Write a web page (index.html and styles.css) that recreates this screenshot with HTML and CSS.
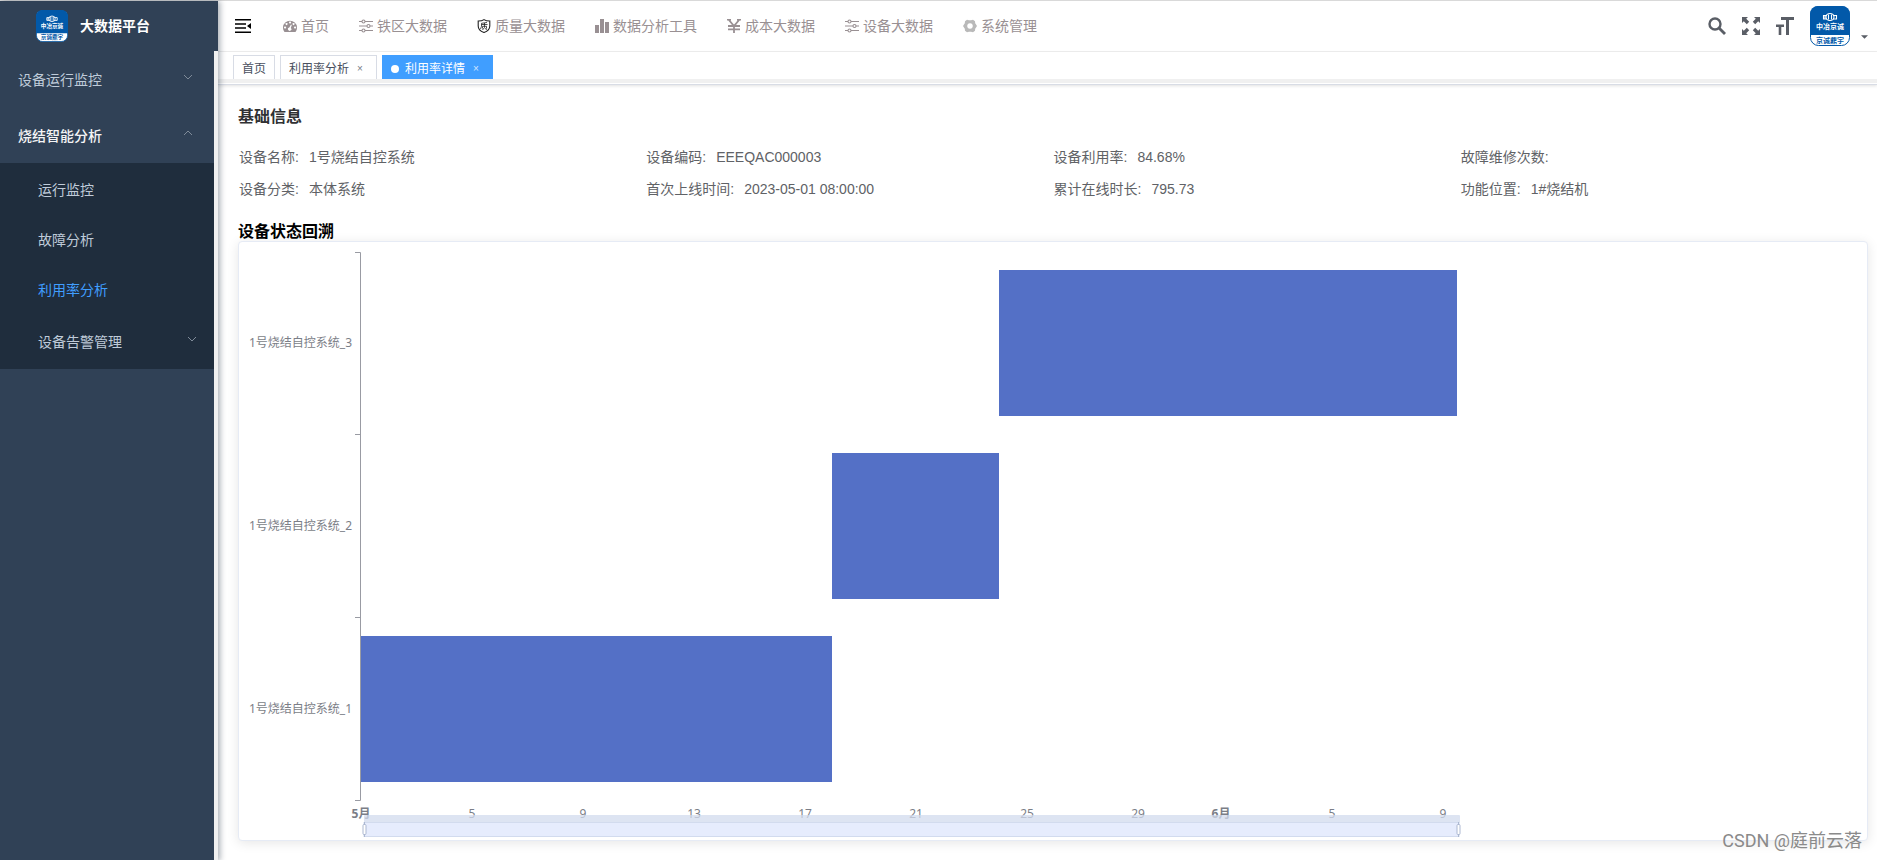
FILE: index.html
```
<!DOCTYPE html>
<html lang="zh-CN">
<head>
<meta charset="utf-8">
<title>大数据平台</title>
<link rel="stylesheet" href="styles.css">
</head>
<body>
<svg class="defs" aria-hidden="true">
  <symbol id="sliders" viewBox="0 0 14 14"><g fill="none" stroke="currentColor" stroke-width="1.1"><path d="M0 2.500h3M6 2.500h8M0 7h8M11 7h3M0 11.500h3M6 11.500h8"/><circle cx="4.500" cy="2.500" r="1.500"/><circle cx="9.500" cy="7" r="1.500"/><circle cx="4.500" cy="11.500" r="1.500"/></g></symbol>
  <symbol id="down" viewBox="0 0 10 10"><path d="M1 3l4 4 4-4" fill="none" stroke="currentColor"/></symbol>
  <symbol id="up" viewBox="0 0 10 10"><path d="M1 7l4-4 4 4" fill="none" stroke="currentColor"/></symbol>
  <symbol id="logo" viewBox="0 0 40 40">
    <rect x=".5" y=".5" width="39" height="39" rx="8" fill="#fff" stroke="#0259a9"/>
    <path d="M0 29V8a8 8 0 0 1 8-8h24a8 8 0 0 1 8 8v21z" fill="#0259a9"/>
    <g fill="none" stroke="#fff" stroke-width="1.100"><ellipse cx="20" cy="11" rx="4" ry="3.500"/><path d="M18.500 8.500v5M21.500 8.500v5M17 9.500h-3.500v3.500H17M23 9.500h3.500v3.500H23M15 9.500v3"/></g>
    <text x="20" y="22.500" text-anchor="middle" font-size="7" fill="#fff" font-weight="700">中冶京诚</text>
    <text x="20" y="36.500" text-anchor="middle" font-size="7" fill="#0259a9" font-weight="700">京诚鼎宇</text>
  </symbol>
</svg>
<div class="app">
  <aside class="sidebar">
    <a class="brand" href="#"><svg class="brand-logo"><use href="#logo"/></svg><span>大数据平台</span></a>
    <nav class="menu">
      <button class="menu-item" type="button">设备运行监控<svg class="arrow"><use href="#down"/></svg></button>
      <button class="menu-item opened" type="button">烧结智能分析<svg class="arrow"><use href="#up"/></svg></button>
      <div class="submenu">
        <a href="#">运行监控</a>
        <a href="#">故障分析</a>
        <a href="#" class="current">利用率分析</a>
        <button class="menu-item nested" type="button">设备告警管理<svg class="arrow"><use href="#down"/></svg></button>
      </div>
    </nav>
  </aside>
  <div class="main">
    <header class="navbar">
      <button class="icon-button fold" type="button" aria-label="折叠菜单"><svg viewBox="0 0 16 14"><path d="M0 0h16v1.500H0zM0 4.200h11v1.500H0zM0 8.300h11v1.500H0zM0 12.500h16V14H0zM16 4v6l-4-3z"/></svg></button>
      <nav class="topmenu">
        <a href="#"><svg viewBox="0 0 14 14"><path fill="currentColor" fill-rule="evenodd" d="M1.500 13A7 7 0 1 1 12.500 13zM2 7.500a1 1 0 1 0 .1 0zM3.500 4a1 1 0 1 0 .1 0zM7 2.500a1 1 0 1 0 .1 0zM10.500 4a1 1 0 1 0 .1 0zM12 7.500a1 1 0 1 0 .1 0zM8 5.500l-1.700 3a1.700 1.700 0 1 0 1.500.4l1-3z"/></svg>首页</a>
        <a href="#"><svg><use href="#sliders"/></svg>铁区大数据</a>
        <a href="#"><svg viewBox="0 0 14 14"><g fill="none" stroke="#222"><path d="M7 .6C5 2 3 2 1.200 2v5c0 3.500 3 5.500 5.800 6.500 2.800-1 5.800-3 5.800-6.500V2C11 2 9 2 7 .6z" stroke-width="1.100"/><path stroke-width=".8" d="M10 3.500l-5.500.8v3L3.500 10M4.500 5.500h6M5.500 9.500V7.300h4v2.200M7.500 4v4.500L5.500 11M8 9.500l2 1"/></g></svg>质量大数据</a>
        <a href="#"><svg viewBox="0 0 14 14"><path fill="currentColor" d="M0 6h4v8H0zM5 0h4v14H5zM10 3h4v11h-4z"/></svg>数据分析工具</a>
        <a href="#"><svg viewBox="0 0 14 14"><path fill="none" stroke="currentColor" stroke-width="1.800" d="M1.500.5L7 7l5.500-6.500M7 7v7M1 7h12M1 10.300h12M0 .5h4M10 .5h4"/></svg>成本大数据</a>
        <a href="#"><svg><use href="#sliders"/></svg>设备大数据</a>
        <a href="#"><svg viewBox="0 0 14 14"><path fill="#b9b9b9" fill-rule="evenodd" d="M4 .7l2 .6h2l2-.6 2 1.500.2 2L14 7l-1.800 2.800-.2 2-2 1.500-2-.6H6l-2 .6-2-1.500-.2-2L0 7l1.800-2.800.2-2zM7 4.200A2.800 2.800 0 1 0 7.010 4.200z"/></svg>系统管理</a>
      </nav>
      <div class="tools">
        <button class="icon-button" type="button" aria-label="搜索"><svg viewBox="0 0 18 18"><circle cx="7" cy="7" r="5.500" fill="none" stroke="currentColor" stroke-width="2.400"/><path d="M11 11l6 6" stroke="currentColor" stroke-width="2.800"/></svg></button>
        <button class="icon-button" type="button" aria-label="全屏"><svg viewBox="0 0 18 18"><path fill="currentColor" d="M0 0h6L4.200 1.800l3 3-2.400 2.400-3-3L0 6zM18 0v6l-1.800-1.800-3 3-2.400-2.400 3-3L12 0zM0 18v-6l1.800 1.800 3-3 2.400 2.400-3 3L6 18zM18 18h-6l1.800-1.800-3-3 2.400-2.400 3 3L18 12z"/></svg></button>
        <button class="icon-button" type="button" aria-label="字号"><svg viewBox="0 0 18 18"><path fill="currentColor" d="M5 0h13v3h-5v15h-3V3H5zM0 7.500h8V10H5.300v8H2.700v-8H0z"/></svg></button>
        <button class="avatar" type="button" aria-label="用户"><svg class="avatar-logo"><use href="#logo"/></svg><svg class="caret" viewBox="0 0 8 4"><path fill="currentColor" d="M0 0h8L4 4z"/></svg></button>
      </div>
    </header>
    <div class="tags">
      <a class="tag" href="#">首页</a>
      <a class="tag" href="#">利用率分析<span class="close">×</span></a>
      <a class="tag active" href="#">利用率详情<span class="close">×</span></a>
    </div>
    <main class="content">
      <h2>基础信息</h2>
      <dl class="info">
        <div><dt>设备名称:</dt><dd>1号烧结自控系统</dd></div>
        <div><dt>设备编码:</dt><dd>EEEQAC000003</dd></div>
        <div><dt>设备利用率:</dt><dd>84.68%</dd></div>
        <div><dt>故障维修次数:</dt><dd></dd></div>
        <div><dt>设备分类:</dt><dd>本体系统</dd></div>
        <div><dt>首次上线时间:</dt><dd>2023-05-01 08:00:00</dd></div>
        <div><dt>累计在线时长:</dt><dd>795.73</dd></div>
        <div><dt>功能位置:</dt><dd>1#烧结机</dd></div>
      </dl>
      <h2 class="chart-title">设备状态回溯</h2>
      <section class="card">
        <svg class="chart" viewBox="0 0 1628 598" role="img" aria-label="设备状态回溯">
          <g fill="#5470c6">
            <rect x="760" y="28" width="458" height="146"/>
            <rect x="593" y="211" width="167" height="146"/>
            <rect x="121" y="394" width="472" height="146"/>
          </g>
          <path class="axis" d="M116 10.500h5.500v548H116M116 192.500h5M116 375.500h5"/>
          <g class="label" text-anchor="end">
            <text x="113" y="105">1号烧结自控系统_3</text>
            <text x="113" y="288">1号烧结自控系统_2</text>
            <text x="113" y="471">1号烧结自控系统_1</text>
          </g>
          <g class="label" text-anchor="middle">
            <text class="month" x="122" y="576">5月</text>
            <text x="233" y="576">5</text>
            <text x="344" y="576">9</text>
            <text x="455" y="576">13</text>
            <text x="566" y="576">17</text>
            <text x="677" y="576">21</text>
            <text x="788" y="576">25</text>
            <text x="899" y="576">29</text>
            <text class="month" x="982" y="576">6月</text>
            <text x="1093" y="576">5</text>
            <text x="1204" y="576">9</text>
          </g>
          <rect x="125" y="573" width="1096" height="8" rx="1" fill="#d2dbee" fill-opacity=".75"/>
          <rect x="125" y="580.500" width="1095" height="14" fill="#e6ecfd" stroke="#d2dbee"/>
          <g stroke="#acb8d1" fill="#fff"><path d="M125.500 580v15M1219.500 580v15"/><rect x="124" y="582.500" width="3" height="10" rx="1"/><rect x="1218" y="582.500" width="3" height="10" rx="1"/></g>
        </svg>
      </section>
    </main>
    <span class="watermark">CSDN @庭前云落</span>
  </div>
</div>
</body>
</html>
```
FILE: styles.css
```
* { box-sizing: border-box; }
body {
  margin: 0;
  background: #fff;
  color: #303133;
  font: 14px/20px "Liberation Sans", "Noto Sans CJK SC", sans-serif;
}
a { color: inherit; text-decoration: none; }
button { border: 0; padding: 0; background: none; color: inherit; font: inherit; cursor: pointer; }
.defs { display: none; }
.app { display: flex; min-height: 100vh; border-top: 1px solid #d9d9d9; }

.sidebar {
  position: relative;
  z-index: 1;
  display: flex;
  flex-direction: column;
  flex: 0 0 218px;
  background: #304156;
  box-shadow: 2px 0 6px rgba(0, 21, 41, .35);
}
.brand {
  display: flex;
  align-items: center;
  gap: 12px;
  height: 50px;
  padding-left: 36px;
  color: #fff;
  font-weight: 700;
}
.brand-logo { width: 32px; height: 32px; }
.menu { flex: 1; border-right: 4px solid #f0f0f0; color: #bfcbd9; }
.menu-item {
  display: flex;
  align-items: center;
  justify-content: space-between;
  width: 100%;
  height: 56px;
  padding: 2px 21px 0 18px;
  text-align: left;
}
.menu-item.opened { color: #f4f4f5; font-weight: 500; }
.menu-item.nested { padding: 2px 17px 0 38px; }
.arrow { width: 10px; height: 10px; margin-bottom: 6px; color: #7f8b99; }
.submenu { background: #1f2d3d; }
.submenu a { display: block; height: 50px; padding: 2px 0 0 38px; line-height: 50px; }
.submenu .current { color: #409eff; }

.main { flex: 1; min-width: 0; }
.navbar {
  display: flex;
  align-items: center;
  height: 51px;
  padding: 0 9px 0 17px;
  border-bottom: 1px solid #f0f0f0;
}
.icon-button { display: flex; color: #5a5e66; }
.icon-button svg { width: 18px; height: 18px; }
.fold { color: #000; }
.fold svg { width: 16px; height: 14px; }
.topmenu { display: flex; gap: 30px; margin-left: 32px; color: #999093; white-space: nowrap; }
.topmenu a { display: flex; align-items: center; gap: 4px; }
.topmenu svg { width: 14px; height: 14px; }
.tools { display: flex; align-items: center; gap: 16px; margin-left: auto; }
.avatar { display: flex; align-items: flex-end; gap: 11px; color: #5a5e66; }
.avatar-logo { width: 40px; height: 40px; }
.caret { width: 7px; height: 4px; margin-bottom: 7px; }

.tags {
  display: flex;
  gap: 5px;
  height: 33px;
  padding: 3px 15px 0;
  overflow: hidden;
  border-bottom: 1px solid #d8dce5;
  background: linear-gradient(#fff 27px, #f0f0f0 27px, #f0f0f0 31px, #fff 31px);
  box-shadow: 0 1px 3px rgba(0, 0, 0, .12);
}
.tag {
  display: flex;
  align-items: center;
  height: 24px;
  padding: 3px 8px 0;
  border: 1px solid #d8dce5;
  border-bottom: 0;
  background: #fff;
  color: #495060;
  font-size: 12px;
}
.tag.active { border-color: #409eff; background: #409eff; color: #fff; }
.tag.active::before { width: 8px; height: 8px; margin-right: 6px; border-radius: 50%; background: #fff; content: ""; }
.close { width: 12px; margin-left: 7px; padding-left: 1px; font-size: 10px; opacity: .75; }

.content { padding: 20px 9px 20px 20px; }
h2 { margin: 0; font-size: 16px; font-weight: 700; line-height: 24px; }
.info {
  display: grid;
  grid-template-columns: repeat(4, 1fr);
  row-gap: 12px;
  margin: 18px 0 24px;
  padding-left: 1px;
  color: #606266;
}
.info div { display: flex; gap: 10px; }
.info dd { margin: 0; }
.chart-title { line-height: 18px; color: #000; }
.card {
  border: 1px solid #e6ebf5;
  border-radius: 4px;
  background: #fff;
  box-shadow: 0 2px 12px rgba(0, 0, 0, .1);
}
.chart { display: block; width: 100%; }
.axis { fill: none; stroke: #999ba3; }
.label { fill: #7b7e87; font: 12px "Noto Sans", "Noto Sans CJK SC", sans-serif; }
.month { font-weight: 700; }
.watermark {
  position: absolute;
  right: 15px;
  bottom: 8px;
  z-index: 2;
  color: #8a8a8a;
  font: 18px/22px Roboto, "Noto Sans CJK SC", sans-serif;
}
```
